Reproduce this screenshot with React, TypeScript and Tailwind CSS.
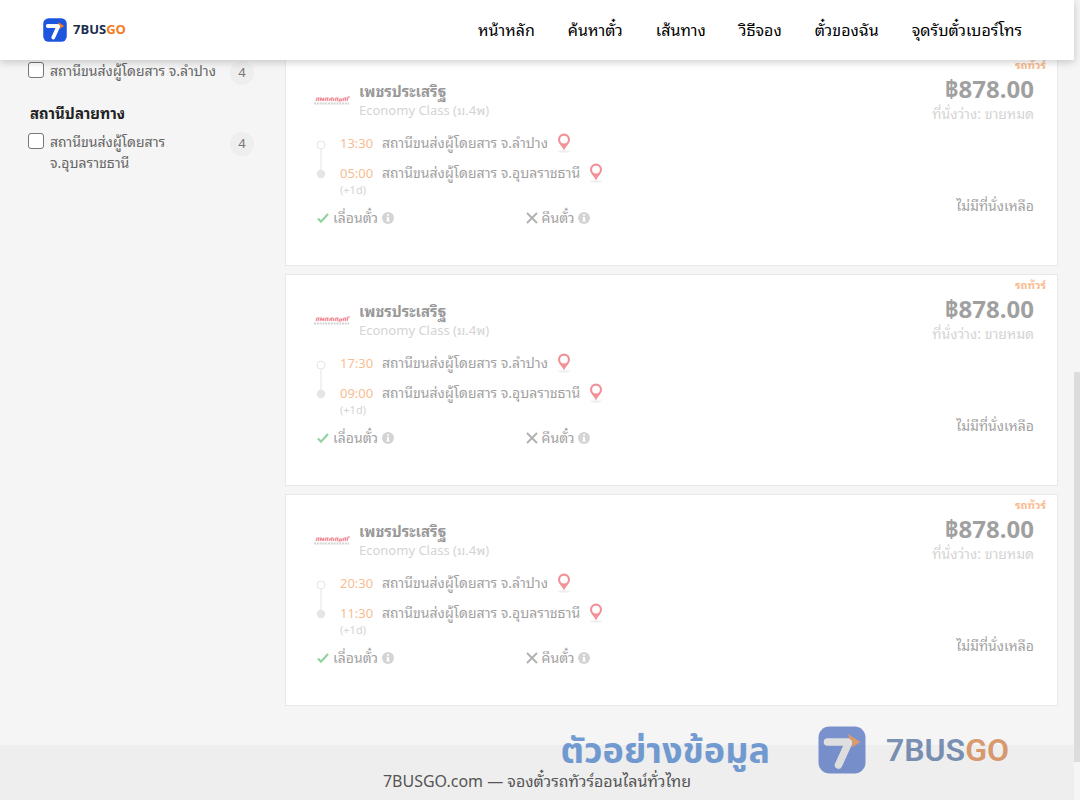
import React from "react";

const trips = [
  { depart: "13:30", arrive: "05:00" },
  { depart: "17:30", arrive: "09:00" },
  { depart: "20:30", arrive: "11:30" },
];

const links = ["หน้าหลัก", "ค้นหาตั๋ว", "เส้นทาง", "วิธีจอง", "ตั๋วของฉัน", "จุดรับตั๋วเบอร์โทร"];

function Mark({ className, tile, digit, arrow }: { className: string; tile: string; digit: string; arrow: string }) {
  return (
    <svg viewBox="0 0 48 48" className={className} aria-hidden="true">
      <rect x="0.5" y="0.5" width="47" height="47" rx="11" fill={tile} />
      <path d="M9.5 16H31L20.5 39" fill="none" stroke={digit} strokeWidth="7.6" strokeLinecap="round" strokeLinejoin="round" />
      <path d="M30 8l12.5 8-8.5 5.5q1.5-7-2.5-8.5z" fill={arrow} />
    </svg>
  );
}

function Pin() {
  return (
    <svg viewBox="0 0 16 20" className="h-5 w-4 shrink-0" aria-hidden="true">
      <ellipse cx="8" cy="18.5" rx="6" ry="1" fill="#ddd" />
      <path fillRule="evenodd" fill="#e92535" d="M8 0.5a6 6 0 0 0-6 6c0 4 4 6 6 11 2-5 6-7 6-11a6 6 0 0 0-6-6zm0 2.2a3.9 3.9 0 1 1 0 7.8 3.9 3.9 0 0 1 0-7.8z" />
    </svg>
  );
}

function Info() {
  return (
    <svg viewBox="0 0 12 12" className="size-3" aria-hidden="true">
      <circle cx="6" cy="6" r="6" fill="#aaa" />
      <path d="M5 2.2h2v1.6H5zM4.5 5H7v3.5h.8v1H4.3v-1H5V6h-.5z" fill="#fff" />
    </svg>
  );
}

function Operator() {
  return (
    <svg viewBox="0 0 36 10" className="h-2.5 w-9" role="img" aria-label="เพชรประเสริฐ">
      <path d="M2 5l1-3h2l-1 3M6 5l1-3 1 2 2-2-1 3M11 5l1-3h2l-1 3M15 5l1-2 2-1-1 3M19 5l1-3M21 5l1-3h2l-1 3M25 5l1-2h2l-1 2zM29 5l1-3h2l-1 3M33 5l1-4h2" fill="none" stroke="#e5162c" strokeWidth="1.2" />
      <path d="M0 7.5h35" stroke="#aaa" strokeWidth="1.8" strokeDasharray="2 0.8" />
    </svg>
  );
}

function Station({ name, count, id }: { name: React.ReactNode; count: number; id: string }) {
  return (
    <div className="flex items-start">
      <input id={id} type="checkbox" className="mt-0.5 size-4 shrink-0 appearance-none rounded-[3px] border-[1.5px] border-[#777] bg-white" />
      <label htmlFor={id} className="ml-1.5 flex-1 text-sm leading-[21px] whitespace-nowrap text-[#666]">{name}</label>
      <span className="mt-px flex size-6 items-center justify-center rounded-full bg-[#eee] text-[13px] text-[#777]">{count}</span>
    </div>
  );
}

function Trip({ depart, arrive }: { depart: string; arrive: string }) {
  return (
    <article className="border border-[#e8e8e8] bg-white">
      <div className="flex h-[210px] justify-between pr-[11px] pl-7 opacity-50">
        <div className="w-[420px] pt-[27px]">
          <div className="flex items-center">
            <Operator />
            <div className="ml-[9px]">
              <h3 className="text-[15px] leading-[19px] font-bold text-[#333]">เพชรประเสริฐ</h3>
              <p className="text-[13px] leading-[18px] text-[#aaa]">Economy Class (ม.4พ)</p>
            </div>
          </div>
          <div className="mt-[9px] flex">
            <svg viewBox="0 0 10 50" className="mt-2.5 ml-0.5 h-[50px] w-2.5" aria-hidden="true">
              <path d="M5 10v24" stroke="#ccc" />
              <circle cx="5" cy="7" r="4" fill="#fff" stroke="#ccc" />
              <circle cx="5" cy="36" r="4.2" fill="#ccc" />
            </svg>
            <div className="ml-3.5 text-sm text-[#444]">
              <div className="flex h-[30px] items-center">
                <time className="w-[42px] text-[13px] text-[#f47b20]">{depart}</time>
                <span className="mr-2">สถานีขนส่งผู้โดยสาร จ.ลำปาง</span>
                <Pin />
              </div>
              <div className="flex h-[30px] items-center">
                <time className="w-[42px] text-[13px] text-[#f47b20]">{arrive}</time>
                <span className="mr-2">สถานีขนส่งผู้โดยสาร จ.อุบลราชธานี</span>
                <Pin />
              </div>
              <p className="-mt-[6px] text-[11px] leading-[15px] text-[#aaa]">(+1d)</p>
            </div>
          </div>
          <div className="mt-[11px] grid grid-cols-2 pl-[3px] text-sm leading-5 text-[#444]">
            <div className="flex items-center gap-1">
              <svg viewBox="0 0 12 12" className="size-3" aria-hidden="true"><path d="M1 6.5l3 3.2L11 2" fill="none" stroke="#28a745" strokeWidth="2.2" /></svg>
              เลื่อนตั๋ว
              <Info />
            </div>
            <div className="flex items-center gap-1">
              <svg viewBox="0 0 12 12" className="size-3" aria-hidden="true"><path d="M1 1l10 10M11 1L1 11" stroke="#666" strokeWidth="1.9" /></svg>
              คืนตั๋ว
              <Info />
            </div>
          </div>
        </div>
        <div className="flex flex-col items-end">
          <span className="h-[17px] overflow-hidden text-[11px] leading-5 font-bold text-[#f47b20]">รถทัวร์</span>
          <div className="flex flex-col items-end pr-3">
            <strong className="text-2xl leading-[34px] text-[#444]">฿878.00</strong>
            <span className="text-sm leading-4 text-[#aaa]">ที่นั่งว่าง: ขายหมด</span>
            <span className="mt-[74px] text-sm leading-5 text-[#444]">ไม่มีที่นั่งเหลือ</span>
          </div>
        </div>
      </div>
    </article>
  );
}

export default function App() {
  return (
    <div className="relative flex h-screen overflow-hidden bg-[#f5f5f5] font-['Noto_Sans','Noto_Sans_Thai_Looped','Leelawadee_UI',Tahoma,Loma,Waree,sans-serif]">
      <div className="flex min-w-0 flex-1 flex-col">
        <header className="z-10 flex h-[60px] shrink-0 items-center justify-between bg-white pr-[52px] pl-[43px] shadow-[0_2px_8px_rgba(0,0,0,0.2)]">
          <a href="#" className="flex items-center gap-1.5">
            <Mark className="size-6" tile="#1d55dc" digit="#fff" arrow="#f47b20" />
            <span className="font-['Open_Sans',sans-serif] text-[13px] font-bold text-[#1b2d50]">7BUS<span className="text-[#f47b20]">GO</span></span>
          </a>
          <nav className="flex gap-[33px] text-base text-black">
            {links.map((link) => <a key={link} href="#">{link}</a>)}
          </nav>
        </header>
        <main className="flex flex-1 pr-4">
          <aside className="w-[285px] shrink-0 pr-[31px] pl-7">
            <Station id="lampang" name="สถานีขนส่งผู้โดยสาร จ.ลำปาง" count={4} />
            <h2 className="mt-[18px] mb-[7px] pl-0.5 text-[15px] leading-[21px] font-bold text-[#222]">สถานีปลายทาง</h2>
            <Station id="ubon" name={<>สถานีขนส่งผู้โดยสาร<br />จ.อุบลราชธานี</>} count={4} />
          </aside>
          <section className="-mt-[6px] flex flex-1 flex-col gap-2">
            {trips.map((trip) => <Trip key={trip.depart} {...trip} />)}
          </section>
        </main>
        <footer className="flex h-[55px] shrink-0 items-center justify-center bg-[#eee] pt-4 text-base text-[#555]">7BUSGO.com — จองตั๋วรถทัวร์ออนไลน์ทั่วไทย</footer>
      </div>
      <div className="w-1.5 bg-[#f5f5f5] pt-[372px]" aria-hidden="true">
        <div className="h-[390px] bg-[#dcdcdc]" />
      </div>
      <div className="pointer-events-none absolute right-[71px] bottom-[26px] flex items-center opacity-60">
        <span className="mr-12 font-['Noto_Sans','Noto_Sans_Thai',sans-serif] text-4xl leading-12 font-bold text-[#1d62bd]">ตัวอย่างข้อมูล</span>
        <Mark className="size-12" tile="#2850b2" digit="#d2d2d2" arrow="#c76016" />
        <span className="ml-5 font-['Roboto',sans-serif] text-[32px] leading-12 font-semibold text-[#294f88]">7BUS<span className="text-[#c76016]">GO</span></span>
      </div>
    </div>
  );
}
